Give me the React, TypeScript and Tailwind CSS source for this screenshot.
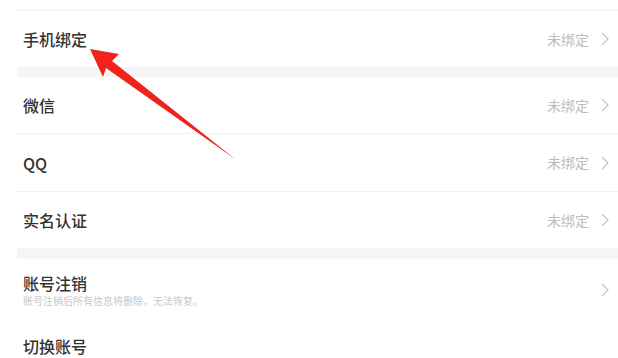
const FONT = "font-['Noto_Sans_CJK_SC','Noto_Sans',sans-serif]";

function Chevron() {
  return (
    <svg width="9" height="14" viewBox="0 0 9 14" fill="none" className="ml-[12px]">
      <path d="M1.5 1.5 L7 7 L1.5 12.5" stroke="#c4c4c4" strokeWidth="1.3" strokeLinecap="round" strokeLinejoin="round" />
    </svg>
  );
}

function Row({ label, value, border, h = 'h-[56px]' }: { label: string; value?: string; border?: boolean; h?: string }) {
  return (
    <div className={`flex items-center justify-between pl-[6px] pr-[8px] ${h} ${border ? 'border-b border-[#f0f0f0]' : ''}`}>
      <span className="text-[16px] font-medium text-[#333333]">{label}</span>
      <div className="flex items-center">
        {value && <span className="text-[14px] text-[#bdbdbd]">{value}</span>}
        <Chevron />
      </div>
    </div>
  );
}

export default function App() {
  return (
    <div className={`relative w-[618px] h-[358px] overflow-hidden bg-white ${FONT}`}>
      <div className="pl-[17px]">
        <div className="h-[11px] border-b border-[#f0f0f0]" />
        <Row label="手机绑定" value="未绑定" />
        <div className="h-[10px] bg-[#f5f5f5]" />
        <Row label="微信" value="未绑定" border h="h-[57px]" />
        <Row label="QQ" value="未绑定" border h="h-[58px]" />
        <Row label="实名认证" value="未绑定" />
        <div className="h-[11px] bg-[#f5f5f5]" />
        <div className="flex items-center justify-between pl-[6px] pr-[8px] h-[61px]">
          <div className="flex flex-col">
            <span className="text-[16px] font-medium leading-[22px] text-[#333333]">账号注销</span>
            <span className="text-[10px] leading-[14px] text-[#c8c8c8]">账号注销后所有信息将删除，无法恢复。</span>
          </div>
          <Chevron />
        </div>
        <div className="flex items-center pl-[6px] h-[52px]">
          <span className="text-[16px] font-medium text-[#333333]">切换账号</span>
        </div>
      </div>
      <svg className="absolute left-0 top-0 pointer-events-none" width="618" height="358" viewBox="0 0 618 358">
        <defs>
          <filter id="blur" x="-20%" y="-20%" width="140%" height="140%">
            <feGaussianBlur stdDeviation="0.6" />
          </filter>
        </defs>
        <polygon
          points="90,49 119,54 112,61 235,159 106,68 103,77"
          fill="#f0201e"
          filter="url(#blur)"
        />
      </svg>
    </div>
  );
}
